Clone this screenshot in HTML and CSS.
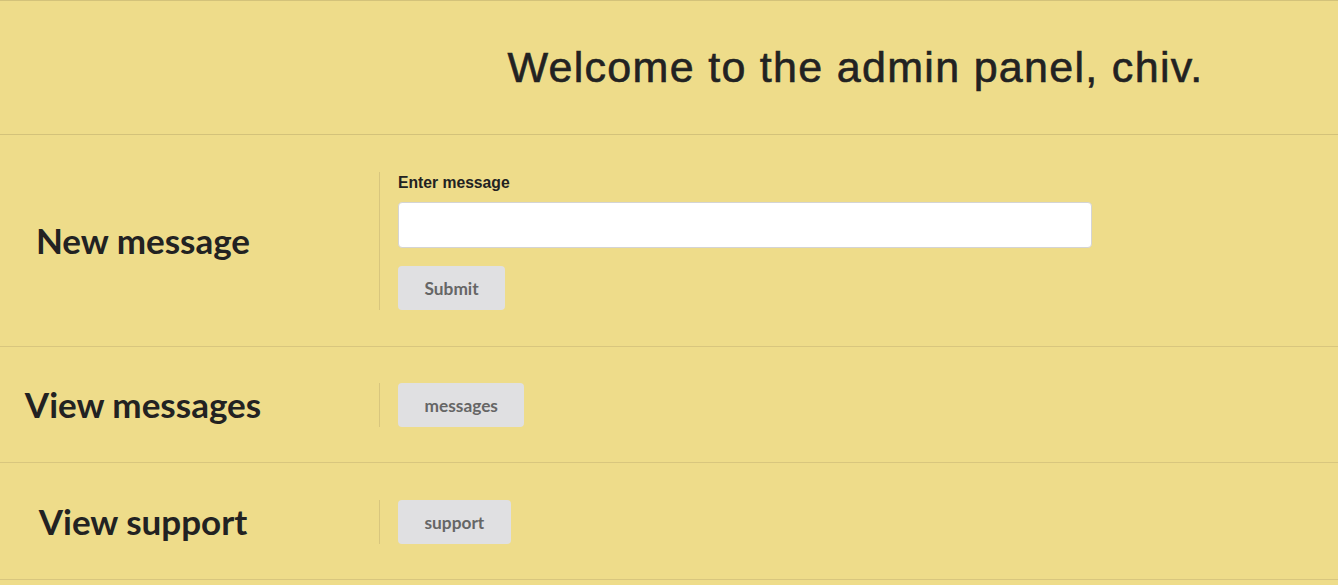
FILE: index.html
```html
<!DOCTYPE html>
<html>
<head>
<meta charset="utf-8">
<link rel="stylesheet" href="styles.css">
</head>
<body>
<header class="top">
  <div class="spacer"></div>
  <h1 class="title">Welcome to the admin panel, chiv.</h1>
</header>
<section class="row">
  <div class="side"><h2>New message</h2></div>
  <div class="main">
    <label class="label" for="msg">Enter message</label>
    <input class="input" id="msg" type="text">
    <button class="btn">Submit</button>
  </div>
</section>
<section class="row">
  <div class="side"><h2>View messages</h2></div>
  <div class="main">
    <button class="btn">messages</button>
  </div>
</section>
<section class="row row-last">
  <div class="side"><h2>View support</h2></div>
  <div class="main">
    <button class="btn">support</button>
  </div>
</section>
</body>
</html>
```

FILE: styles.css
```css
html, body {
  margin: 0;
  padding: 0;
  background: #eedc8a;
  height: 100%;
}
body {
  color: #222;
  font-family: "Lato", "Liberation Sans", sans-serif;
}
.top {
  display: flex;
  align-items: center;
  height: 133px;
  border-top: 1px solid #d3c27a;
  border-bottom: 1px solid #d3c27a;
}
.spacer {
  width: 379px;
  flex: none;
}
.title {
  flex: 1;
  margin: 0;
  text-align: center;
  font-family: "Liberation Sans", Arial, sans-serif;
  font-weight: normal;
  font-size: 43px;
  letter-spacing: 1.3px;
  -webkit-text-stroke: 0.6px #222;
  color: #222;
  padding: 0 6px 0 0;
}
.row {
  display: flex;
  align-items: center;
  padding: 37px 0 36px;
  border-bottom: 1px solid #d8c67e;
}
.row + .row {
  padding: 36px 0 35px;
}
.row.row-last {
  padding: 37px 0 35px;
}
.side {
  width: 286px;
  padding-right: 93px;
  flex: none;
  text-align: center;
}
.side h2 {
  margin: 0 0 3px;
  line-height: 40px;
  font-family: "Lato", sans-serif;
  font-weight: bold;
  font-size: 35px;
  color: #222;
}
.main {
  display: flex;
  flex-direction: column;
  align-items: flex-start;
  border-left: 1px solid #d8c67e;
  padding-left: 18px;
}
.label {
  font-family: "Liberation Sans", Arial, sans-serif;
  font-weight: bold;
  font-size: 15.7px;
  line-height: 18px;
  margin: 2px 0 10px;
  color: #222;
}
.input {
  box-sizing: border-box;
  width: 694px;
  height: 46px;
  background: #fff;
  border: 1px solid #d4d4d4;
  border-radius: 4px;
  margin: 0 0 18px;
  padding: 0 12px;
}
.btn {
  height: 44px;
  padding: 0 26.5px;
  background: #e0e0e2;
  border: none;
  border-radius: 4px;
  font-family: "Lato", sans-serif;
  font-weight: bold;
  font-size: 17.3px;
  color: #666;
}
```
